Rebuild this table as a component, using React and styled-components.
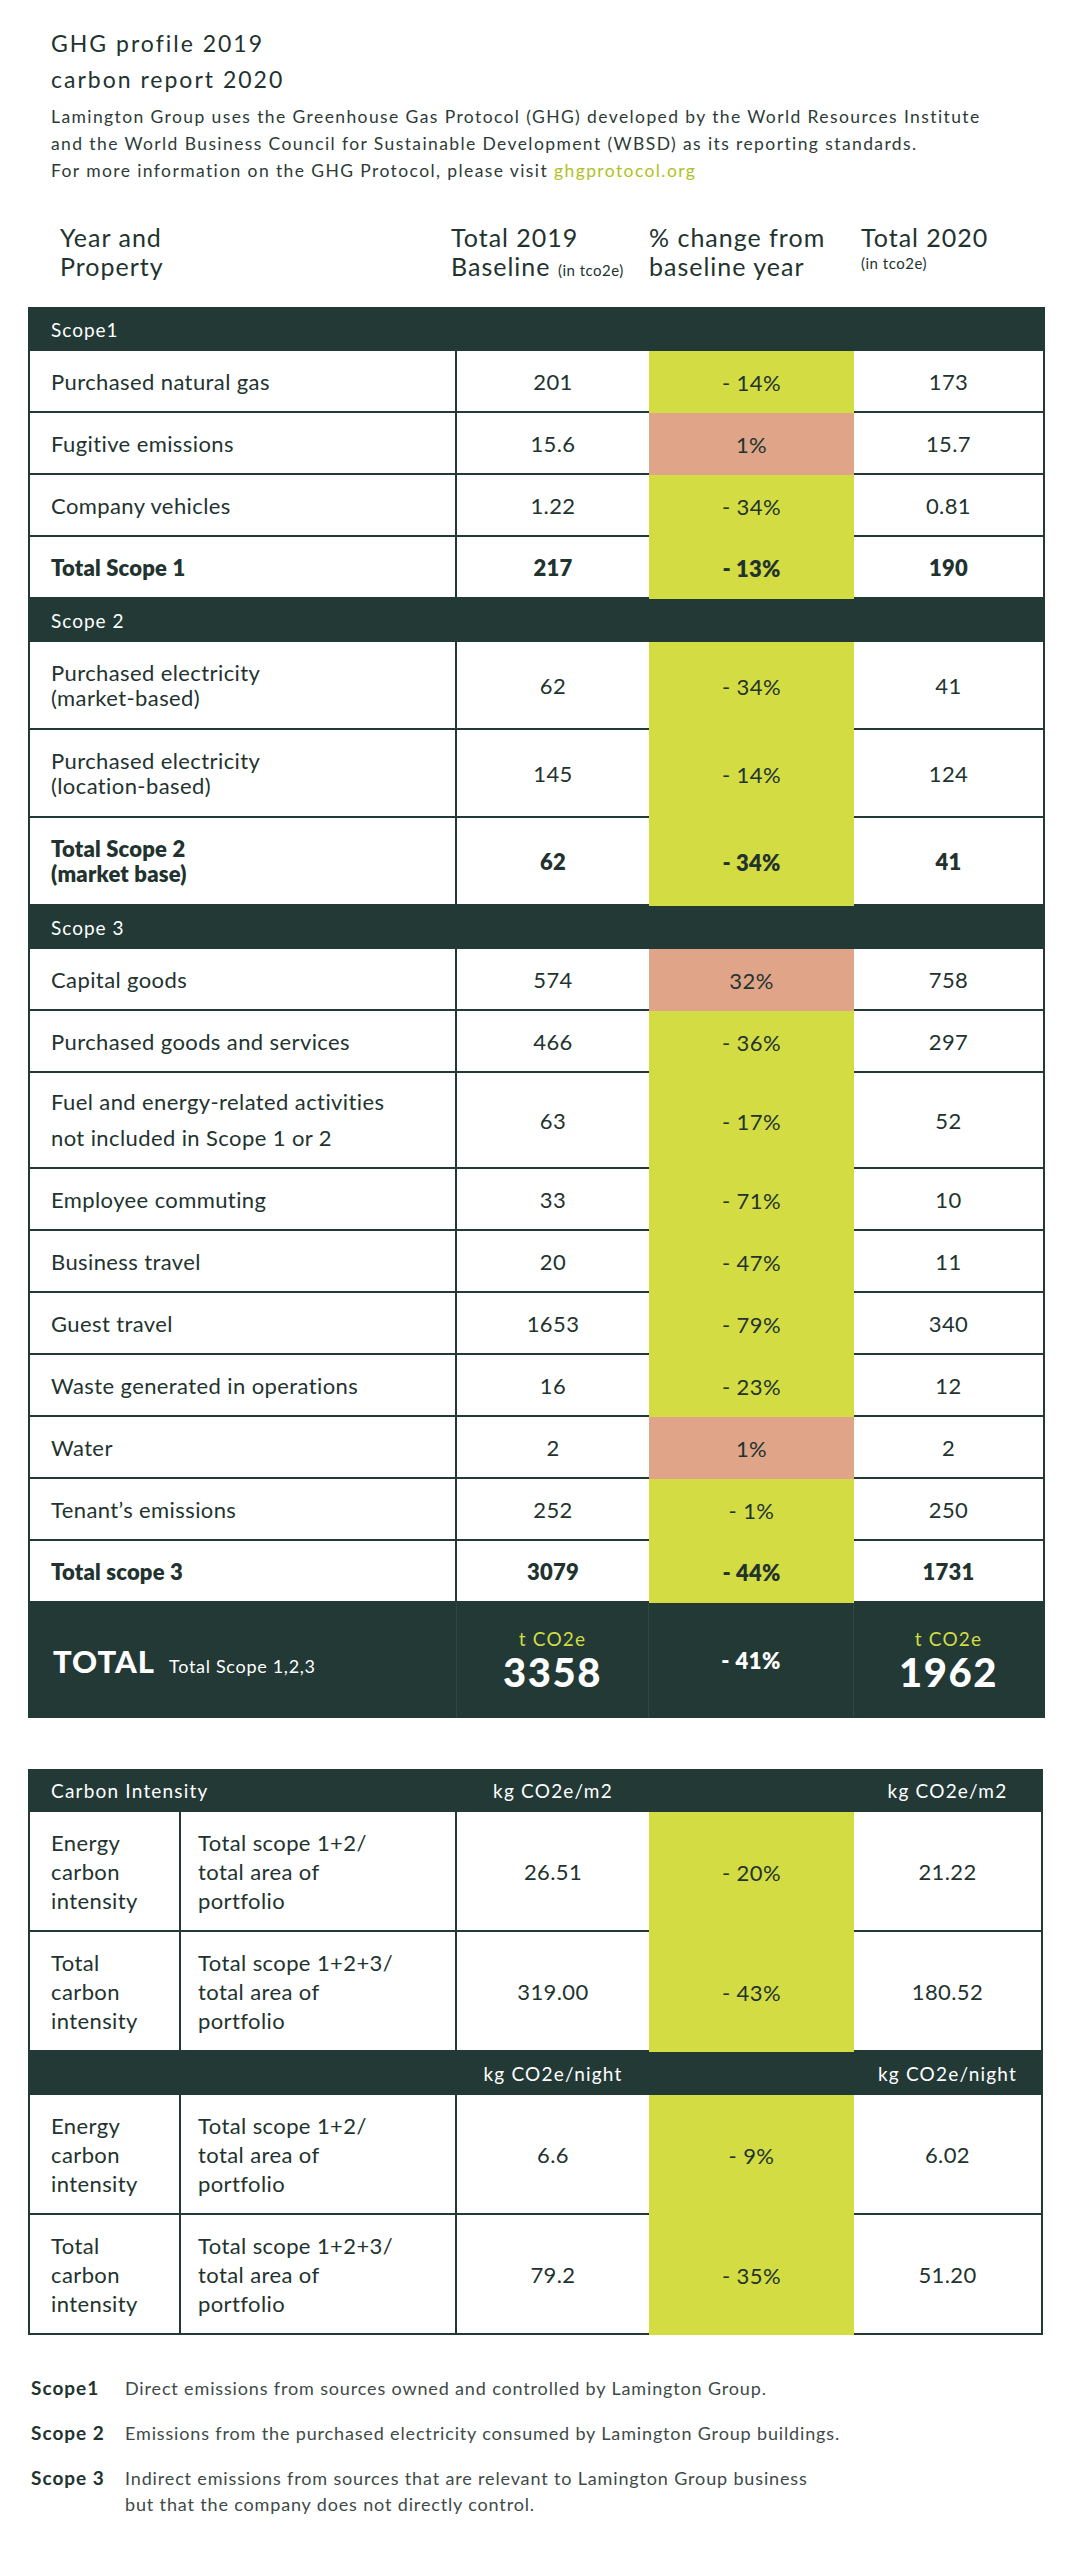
import React from "react";
import styled, { createGlobalStyle } from "styled-components";

const INK = "#22332f";
const DARK = "#223936";
const LIME = "#d3dc42";
const SALMON = "#e0a589";
const LINK = "#b2bf1e";

const GlobalStyle = createGlobalStyle`
  html, body { margin: 0; padding: 0; background: #ffffff; }
  body {
    font-family: Lato, "Open Sans", "Liberation Sans", sans-serif;
    color: ${INK};
    -webkit-font-smoothing: antialiased;
  }
  * { box-sizing: border-box; }
`;

const Page = styled.div`
  width: 1017px;
  margin-left: 28px;
  padding-bottom: 50px;
`;

const Intro = styled.header`
  padding: 25px 0 0 23px;
`;

const Title = styled.h1`
  margin: 0;
  font-size: 23px;
  font-weight: 400;
  line-height: 36px;
  letter-spacing: 2px;
  color: ${INK};
`;

const Lead = styled.p`
  margin: 6px 0 0;
  font-size: 17.5px;
  line-height: 27px;
  letter-spacing: 1.4px;
  color: #2c3b37;
`;

const Link = styled.a`
  color: ${LINK};
  text-decoration: none;
`;

const HeadGrid = styled.div`
  display: grid;
  grid-template-columns: 423px 198px 212px 1fr;
  margin-top: 39px;
  margin-bottom: 22px;
`;

const HeadCell = styled.div`
  padding-left: ${(p) => p.$pad || 0}px;
  font-size: 25px;
  line-height: 29px;
  letter-spacing: 1px;
  color: ${INK};
`;

const Unit = styled.span`
  font-size: 15px;
  letter-spacing: 0.5px;
`;

const UnitLine = styled.div`
  font-size: 15px;
  line-height: 22px;
  letter-spacing: 0.5px;
`;

const Table = styled.section`
  border-left: 2px solid ${DARK};
  border-right: 2px solid ${DARK};
`;

const Bar = styled.div`
  height: ${(p) => p.$h || 43}px;
  background: ${DARK};
  color: #ffffff;
  display: flex;
  align-items: center;
  padding-left: 21px;
  font-size: 19px;
  letter-spacing: 1px;
`;

const Row = styled.div`
  display: grid;
  grid-template-columns: 427px 192px 205px 1fr;
  height: ${(p) => p.$h || 62}px;
  border-bottom: 2px solid ${DARK};
  font-size: 22px;
  font-weight: ${(p) => (p.$bold ? 800 : 400)};
  letter-spacing: ${(p) => (p.$bold ? 0.2 : 0.4)}px;
  color: ${INK};
`;

const NameCell = styled.div`
  display: flex;
  align-items: center;
  padding-left: 21px;
  border-right: 2px solid ${DARK};
  line-height: ${(p) => p.$lh || 25}px;
`;

const ValueCell = styled.div`
  display: flex;
  align-items: center;
  justify-content: center;
`;

const ChangeCell = styled(ValueCell)`
  background: ${(p) => (p.$up ? SALMON : LIME)};
  margin-bottom: -2px;
`;

const TotalBar = styled.div`
  display: grid;
  grid-template-columns: 427px 192px 205px 1fr;
  height: 115px;
  background: ${DARK};
  color: #ffffff;
`;

const TotalCell = styled.div`
  display: flex;
  flex-direction: column;
  align-items: ${(p) => (p.$left ? "flex-start" : "center")};
  justify-content: center;
  padding-left: ${(p) => (p.$left ? 23 : 0)}px;
  border-right: ${(p) => (p.$last ? "none" : "1px solid #2e4743")};
`;

const TotalLabel = styled.div`
  display: flex;
  align-items: baseline;
  gap: 14px;
`;

const TotalBig = styled.span`
  font-size: 31px;
  font-weight: 900;
  letter-spacing: 1px;
`;

const TotalSmall = styled.span`
  font-size: 18px;
  letter-spacing: 0.7px;
`;

const UnitTag = styled.span`
  color: ${LIME};
  font-size: 19px;
  letter-spacing: 1.2px;
  line-height: 22px;
`;

const BigNumber = styled.span`
  font-size: 40px;
  font-weight: 900;
  letter-spacing: 1.5px;
  line-height: 44px;
`;

const TotalChange = styled.span`
  font-size: 22px;
  font-weight: 800;
  letter-spacing: 0.5px;
`;

const IntensityTable = styled.section`
  margin-top: 51px;
  border-left: 2px solid ${DARK};
  border-right: 2px solid ${DARK};
  width: 1015px;
`;

const IGrid = styled.div`
  display: grid;
  grid-template-columns: 151px 276px 192px 205px 1fr;
`;

const IBar = styled(IGrid)`
  height: 43px;
  background: ${DARK};
  color: #ffffff;
  font-size: 19px;
  letter-spacing: 1.2px;
`;

const IBarCell = styled.div`
  display: flex;
  align-items: center;
  justify-content: ${(p) => (p.$center ? "center" : "flex-start")};
  padding-left: ${(p) => p.$pad || 0}px;
  grid-column: ${(p) => p.$span || "auto"};
`;

const IRow = styled(IGrid)`
  height: 120px;
  border-bottom: 2px solid ${DARK};
  font-size: 22px;
  letter-spacing: 0.4px;
  color: ${INK};
`;

const ITextCell = styled.div`
  display: flex;
  align-items: center;
  padding-left: ${(p) => p.$pad || 21}px;
  border-right: 2px solid ${DARK};
  line-height: 29px;
`;

const Notes = styled.dl`
  margin: 40px 0 0 3px;
  display: flex;
  flex-direction: column;
  gap: 19px;
`;

const Note = styled.div`
  display: grid;
  grid-template-columns: 94px 1fr;
  line-height: 26px;
`;

const NoteTerm = styled.dt`
  color: ${INK};
  font-size: 19px;
  font-weight: 700;
  letter-spacing: 1px;
`;

const NoteText = styled.dd`
  margin: 0;
  color: #3e4a47;
  font-size: 18px;
  letter-spacing: 0.85px;
`;

const scope1 = [
  ["Purchased natural gas", "201", "- 14%", "173"],
  ["Fugitive emissions", "15.6", "1%", "15.7", true],
  ["Company vehicles", "1.22", "- 34%", "0.81"],
];

const scope2 = [
  [["Purchased electricity", "(market-based)"], "62", "- 34%", "41"],
  [["Purchased electricity", "(location-based)"], "145", "- 14%", "124"],
];

const scope3 = [
  ["Capital goods", "574", "32%", "758", true],
  ["Purchased goods and services", "466", "- 36%", "297"],
  [["Fuel and energy-related activities", "not included in Scope 1 or 2"], "63", "- 17%", "52", false, 96, 36],
  ["Employee commuting", "33", "- 71%", "10"],
  ["Business travel", "20", "- 47%", "11"],
  ["Guest travel", "1653", "- 79%", "340"],
  ["Waste generated in operations", "16", "- 23%", "12"],
  ["Water", "2", "1%", "2", true],
  ["Tenant\u2019s emissions", "252", "- 1%", "250"],
];

function Lines({ text }) {
  if (!Array.isArray(text)) return text;
  return (
    <span>
      {text.map((t, i) => (
        <React.Fragment key={i}>
          {t}
          {i < text.length - 1 && <br />}
        </React.Fragment>
      ))}
    </span>
  );
}

function DataRow({ name, a, change, b, up, h, lh, bold }) {
  return (
    <Row $h={h} $bold={bold}>
      <NameCell $lh={lh}>
        <Lines text={name} />
      </NameCell>
      <ValueCell>{a}</ValueCell>
      <ChangeCell $up={up}>{change}</ChangeCell>
      <ValueCell>{b}</ValueCell>
    </Row>
  );
}

function renderRows(rows, defaultH) {
  return rows.map(([name, a, change, b, up, h, lh]) => (
    <DataRow
      key={Array.isArray(name) ? name.join(" ") : name}
      name={name}
      a={a}
      change={change}
      b={b}
      up={up}
      h={h || defaultH}
      lh={lh}
    />
  ));
}

const intensity = [
  {
    unit: "kg CO2e/m2",
    title: "Carbon Intensity",
    rows: [
      [["Energy", "carbon", "intensity"], ["Total scope 1+2/", "total area of", "portfolio"], "26.51", "- 20%", "21.22"],
      [["Total", "carbon", "intensity"], ["Total scope 1+2+3/", "total area of", "portfolio"], "319.00", "- 43%", "180.52"],
    ],
  },
  {
    unit: "kg CO2e/night",
    title: "",
    rows: [
      [["Energy", "carbon", "intensity"], ["Total scope 1+2/", "total area of", "portfolio"], "6.6", "- 9%", "6.02"],
      [["Total", "carbon", "intensity"], ["Total scope 1+2+3/", "total area of", "portfolio"], "79.2", "- 35%", "51.20"],
    ],
  },
];

export default function App() {
  return (
    <>
      <GlobalStyle />
      <Page>
        <Intro>
          <Title>
            GHG profile 2019
            <br />
            carbon report 2020
          </Title>
          <Lead>
            Lamington Group uses the Greenhouse Gas Protocol (GHG) developed by the World Resources Institute
            <br />
            and the World Business Council for Sustainable Development (WBSD) as its reporting standards.
            <br />
            For more information on the GHG Protocol, please visit <Link href="#">ghgprotocol.org</Link>
          </Lead>
        </Intro>

        <HeadGrid>
          <HeadCell $pad={32}>
            Year and
            <br />
            Property
          </HeadCell>
          <HeadCell>
            Total 2019
            <br />
            Baseline <Unit>(in tco2e)</Unit>
          </HeadCell>
          <HeadCell>
            % change from
            <br />
            baseline year
          </HeadCell>
          <HeadCell>
            Total 2020
            <UnitLine>(in tco2e)</UnitLine>
          </HeadCell>
        </HeadGrid>

        <Table>
          <Bar $h={44}>Scope1</Bar>
          {renderRows(scope1, 62)}
          <DataRow name="Total Scope 1" a="217" change="- 13%" b="190" bold h={62} />

          <Bar>Scope 2</Bar>
          {renderRows(scope2, 88)}
          <DataRow name={["Total Scope 2", "(market base)"]} a="62" change="- 34%" b="41" bold h={88} />

          <Bar>Scope 3</Bar>
          {renderRows(scope3, 62)}
          <DataRow name="Total scope 3" a="3079" change="- 44%" b="1731" bold h={62} />

          <TotalBar>
            <TotalCell $left>
              <TotalLabel>
                <TotalBig>TOTAL</TotalBig>
                <TotalSmall>Total Scope 1,2,3</TotalSmall>
              </TotalLabel>
            </TotalCell>
            <TotalCell>
              <UnitTag>t CO2e</UnitTag>
              <BigNumber>3358</BigNumber>
            </TotalCell>
            <TotalCell>
              <TotalChange>- 41%</TotalChange>
            </TotalCell>
            <TotalCell $last>
              <UnitTag>t CO2e</UnitTag>
              <BigNumber>1962</BigNumber>
            </TotalCell>
          </TotalBar>
        </Table>

        <IntensityTable>
          {intensity.map((block) => (
            <React.Fragment key={block.unit}>
              <IBar>
                <IBarCell $span="1 / 3" $pad={21}>
                  {block.title}
                </IBarCell>
                <IBarCell $center>{block.unit}</IBarCell>
                <IBarCell />
                <IBarCell $center>{block.unit}</IBarCell>
              </IBar>
              {block.rows.map(([label, formula, a, change, b]) => (
                <IRow key={label.join(" ") + formula.join(" ") + a}>
                  <ITextCell>
                    <Lines text={label} />
                  </ITextCell>
                  <ITextCell $pad={17}>
                    <Lines text={formula} />
                  </ITextCell>
                  <ValueCell>{a}</ValueCell>
                  <ChangeCell>{change}</ChangeCell>
                  <ValueCell>{b}</ValueCell>
                </IRow>
              ))}
            </React.Fragment>
          ))}
        </IntensityTable>

        <Notes>
          <Note>
            <NoteTerm>Scope1</NoteTerm>
            <NoteText>Direct emissions from sources owned and controlled by Lamington Group.</NoteText>
          </Note>
          <Note>
            <NoteTerm>Scope 2</NoteTerm>
            <NoteText>Emissions from the purchased electricity consumed by Lamington Group buildings.</NoteText>
          </Note>
          <Note>
            <NoteTerm>Scope 3</NoteTerm>
            <NoteText>
              Indirect emissions from sources that are relevant to Lamington Group business
              <br />
              but that the company does not directly control.
            </NoteText>
          </Note>
        </Notes>
      </Page>
    </>
  );
}
